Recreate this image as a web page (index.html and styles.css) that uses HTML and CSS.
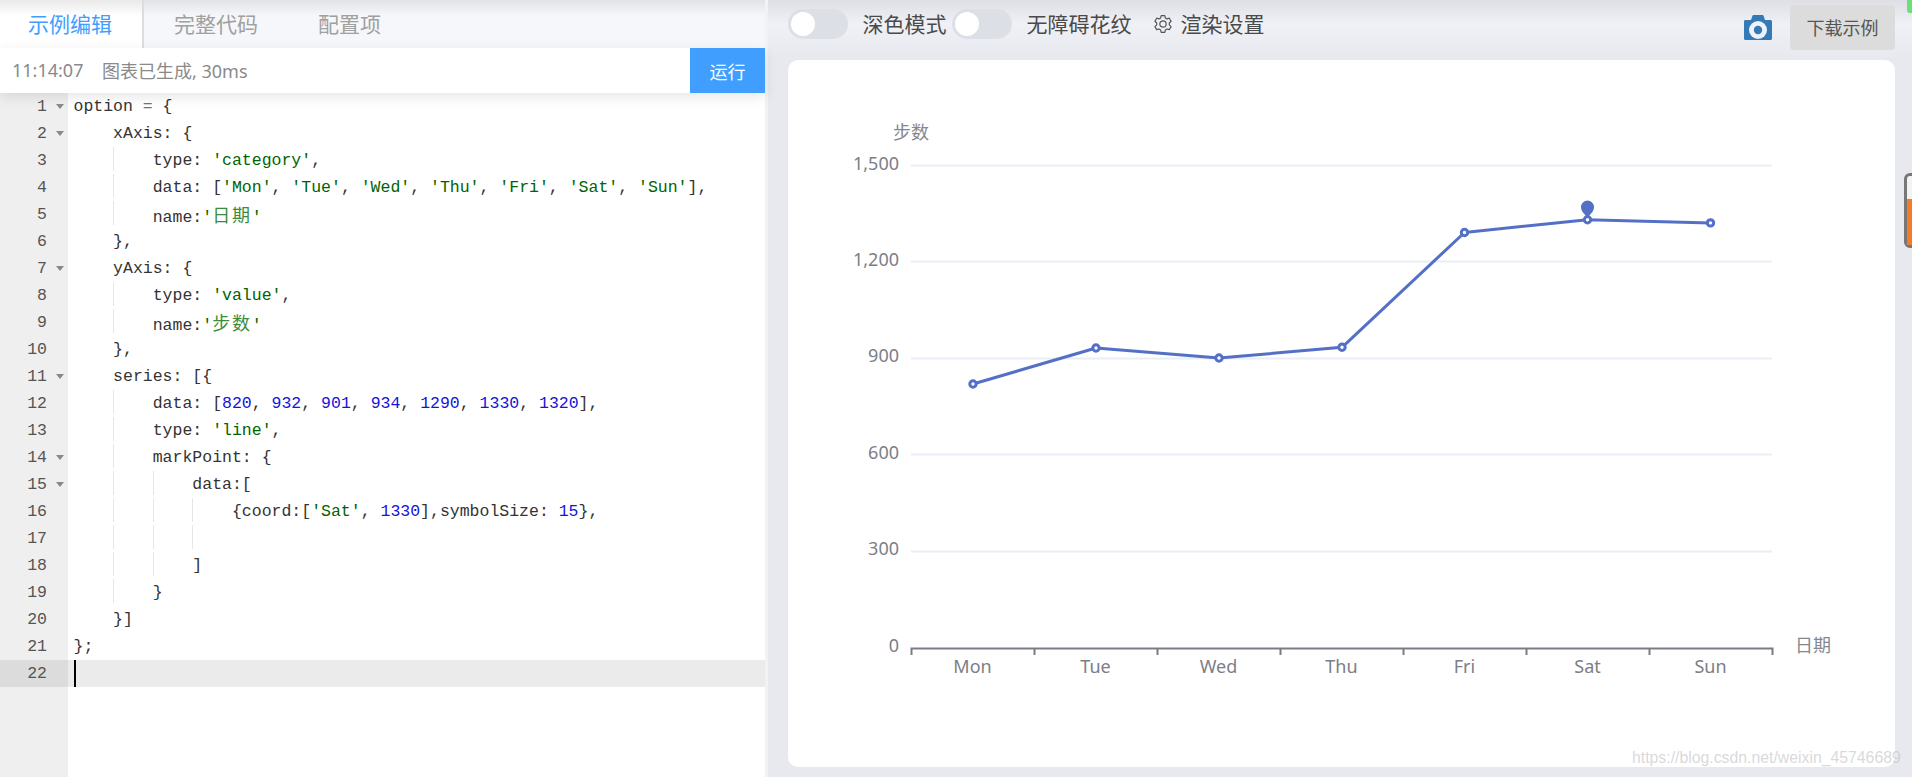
FILE: index.html
```html
<!DOCTYPE html>
<html lang="zh">
<head>
<meta charset="utf-8">
<title>示例编辑</title>
<link rel="stylesheet" href="styles.css">
</head>
<body>
<div class="page">
  <section class="left">
    <nav class="tabs">
      <a class="tab active">示例编辑</a>
      <a class="tab">完整代码</a>
      <a class="tab">配置项</a>
    </nav>
    <div class="status">
      <span class="time">11:14:07</span>
      <span class="msg">图表已生成, 30ms</span>
      <button class="run">运行</button>
    </div>
    <div class="editor">
      <div class="gutter">
        <div class="num fold">1</div>
        <div class="num fold">2</div>
        <div class="num">3</div>
        <div class="num">4</div>
        <div class="num">5</div>
        <div class="num">6</div>
        <div class="num fold">7</div>
        <div class="num">8</div>
        <div class="num">9</div>
        <div class="num">10</div>
        <div class="num fold">11</div>
        <div class="num">12</div>
        <div class="num">13</div>
        <div class="num fold">14</div>
        <div class="num fold">15</div>
        <div class="num">16</div>
        <div class="num">17</div>
        <div class="num">18</div>
        <div class="num">19</div>
        <div class="num">20</div>
        <div class="num">21</div>
        <div class="num current">22</div>
      </div>
      <div class="code">
<div class="line">option <span class="o">=</span> {</div>
<div class="line"><span class="i">    </span>xAxis: {</div>
<div class="line"><span class="i">    </span><span class="g">    </span>type: <span class="s">'category'</span>,</div>
<div class="line"><span class="i">    </span><span class="g">    </span>data: [<span class="s">'Mon'</span>, <span class="s">'Tue'</span>, <span class="s">'Wed'</span>, <span class="s">'Thu'</span>, <span class="s">'Fri'</span>, <span class="s">'Sat'</span>, <span class="s">'Sun'</span>],</div>
<div class="line"><span class="i">    </span><span class="g">    </span>name:<span class="s">'<span class="c">日期</span>'</span></div>
<div class="line"><span class="i">    </span>},</div>
<div class="line"><span class="i">    </span>yAxis: {</div>
<div class="line"><span class="i">    </span><span class="g">    </span>type: <span class="s">'value'</span>,</div>
<div class="line"><span class="i">    </span><span class="g">    </span>name:<span class="s">'<span class="c">步数</span>'</span></div>
<div class="line"><span class="i">    </span>},</div>
<div class="line"><span class="i">    </span>series: [{</div>
<div class="line"><span class="i">    </span><span class="g">    </span>data: [<span class="n">820</span>, <span class="n">932</span>, <span class="n">901</span>, <span class="n">934</span>, <span class="n">1290</span>, <span class="n">1330</span>, <span class="n">1320</span>],</div>
<div class="line"><span class="i">    </span><span class="g">    </span>type: <span class="s">'line'</span>,</div>
<div class="line"><span class="i">    </span><span class="g">    </span>markPoint: {</div>
<div class="line"><span class="i">    </span><span class="g">    </span><span class="g">    </span>data:[</div>
<div class="line"><span class="i">    </span><span class="g">    </span><span class="g">    </span><span class="g">    </span>{coord:[<span class="s">'Sat'</span>, <span class="n">1330</span>],symbolSize: <span class="n">15</span>},</div>
<div class="line"><span class="i">    </span><span class="g">    </span><span class="g">    </span><span class="g">    </span></div>
<div class="line"><span class="i">    </span><span class="g">    </span><span class="g">    </span>]</div>
<div class="line"><span class="i">    </span><span class="g">    </span>}</div>
<div class="line"><span class="i">    </span>}]</div>
<div class="line">};</div>
<div class="line current"><span class="cursor"></span></div>
      </div>
    </div>
  </section>
  <div class="split"></div>
  <section class="right">
    <div class="tools">
      <span class="switch"><span class="knob"></span></span>
      <span class="label first">深色模式</span>
      <span class="switch"><span class="knob"></span></span>
      <span class="label second">无障碍花纹</span>
      <svg class="gear" viewBox="0 0 20 20" width="20" height="20">
        <path d="M8.2 1.6h3.6l.6 2.4 1.5.9 2.4-.7 1.8 3.1-1.8 1.7v1.9l1.8 1.7-1.8 3.1-2.4-.7-1.5.9-.6 2.4H8.2l-.6-2.4-1.5-.9-2.4.7-1.8-3.1 1.8-1.7V9l-1.8-1.7 1.8-3.1 2.4.7 1.5-.9z" fill="none" stroke="#555" stroke-width="1.2" stroke-linejoin="round"/>
        <circle cx="10" cy="10" r="3.2" fill="none" stroke="#555" stroke-width="1.2"/>
      </svg>
      <span class="label">渲染设置</span>
      <svg class="camera" viewBox="0 0 28 25" width="28" height="25">
        <path d="M1.5 5H7l1.2-3.6C8.5.5 9 0 10 0h8c1 0 1.500.5 1.800 1.400L21 5h5.500C27.400 5 28 5.600 28 6.500v17c0 .9-.6 1.500-1.500 1.500h-25C.6 25 0 24.400 0 23.500v-17C0 5.600.6 5 1.500 5z" fill="#337ab7"/>
        <circle cx="14" cy="15" r="9" fill="#f1f2f7"/>
        <circle cx="14" cy="15" r="4.200" fill="#337ab7"/>
      </svg>
      <button class="download">下载示例</button>
    </div>
    <div class="card">
      <svg class="chart" viewBox="788 60 1107 707" width="1107" height="707">
        <g class="grid">
          <line x1="911" x2="1772" y1="165.500" y2="165.500"/>
          <line x1="911" x2="1772" y1="261.500" y2="261.500"/>
          <line x1="911" x2="1772" y1="358.500" y2="358.500"/>
          <line x1="911" x2="1772" y1="454.500" y2="454.500"/>
          <line x1="911" x2="1772" y1="551.500" y2="551.500"/>
        </g>
        <path class="axis" d="M911.500 655V648.500H1772.500V655M1034.500 648.500V655M1157.500 648.500V655M1280.500 648.500V655M1403.500 648.500V655M1526.500 648.500V655M1649.500 648.500V655"/>
        <g class="ylab">
          <text x="899" y="170">1,500</text>
          <text x="899" y="266">1,200</text>
          <text x="899" y="362">900</text>
          <text x="899" y="459">600</text>
          <text x="899" y="555">300</text>
          <text x="899" y="652">0</text>
        </g>
        <g class="xlab">
          <text x="972.500" y="672.500">Mon</text>
          <text x="1095.500" y="672.500">Tue</text>
          <text x="1218.500" y="672.500">Wed</text>
          <text x="1341.500" y="672.500">Thu</text>
          <text x="1464.500" y="672.500">Fri</text>
          <text x="1587.500" y="672.500">Sat</text>
          <text x="1710.500" y="672.500">Sun</text>
        </g>
        <text class="name" x="893" y="139">步数</text>
        <text class="name" x="1795" y="652">日期</text>
        <polyline class="series" points="973,384 1096,348 1219,358 1342,347.300 1464.500,232.500 1587.500,219.700 1710.500,222.900"/>
        <g class="dots">
          <circle cx="973" cy="384" r="3.200"/>
          <circle cx="1096" cy="348" r="3.200"/>
          <circle cx="1219" cy="358" r="3.200"/>
          <circle cx="1342" cy="347.300" r="3.200"/>
          <circle cx="1464.500" cy="232.500" r="3.200"/>
          <circle cx="1587.500" cy="219.700" r="3.200"/>
          <circle cx="1710.500" cy="222.900" r="3.200"/>
        </g>
        <path class="pin" d="M1587.500 218.500C1586 214.500 1581 212.500 1581 207A6.500 6.500 0 0 1 1594 207C1594 212.500 1589 214.500 1587.500 218.500Z"/>
      </svg>
    </div>
  </section>
  <div class="corner"></div>
  <div class="handle"><span class="handle-fill"></span></div>
  <div class="mark">https://blog.csdn.net/weixin_45746689</div>
</div>
</body>
</html>
```
FILE: styles.css
```css
* { box-sizing: border-box; }
html, body { margin: 0; height: 100%; overflow: hidden; }
body { font-family: "Noto Sans", "Noto Sans CJK SC", sans-serif; background: #e8e9ee; }
.page { position: relative; display: flex; width: 1912px; height: 777px; overflow: hidden; }

.left { width: 765px; flex: none; display: flex; flex-direction: column; background: #fff; }
.split { width: 3px; flex: none; background: #f1f2f5; }
.right { flex: 1; display: flex; flex-direction: column; background: linear-gradient(#dedfe4 0, #f0f1f6 24px, #e8e9ee 58px); }

.tabs { height: 48px; display: flex; flex: none; background: linear-gradient(#e2e3e6 0, #f6f7fb 16px); }
.tab { display: flex; align-items: center; padding: 0 30px; font-size: 21px; line-height: 48px; color: #a0a0a0; }
.tab.active { width: 144px; padding: 0 0 0 28px; color: #409eff; background: linear-gradient(#e9e9e9 0, #fff 16px); border-right: 2px solid #ddd; }

.status { height: 45px; flex: none; display: flex; align-items: center; position: relative; padding-bottom: 2px; background: #fff; box-shadow: 0 4px 12px rgba(0, 0, 0, .1); font-size: 18px; color: #8a8a8a; }
.time { margin-left: 12px; width: 90px; }
.msg { flex: 1; }
.run { width: 75px; height: 45px; margin-bottom: -2px; border: 0; padding: 0; background: #409eff; color: #fff; font: inherit; }

.editor { flex: 1; display: flex; font-family: "Liberation Mono", monospace; font-size: 16.500px; line-height: 27px; color: #333; }
.gutter { width: 68px; flex: none; background: #efefef; }
.num { position: relative; height: 27px; padding-right: 21px; text-align: right; color: #555; }
.num.fold::after { content: ""; position: absolute; left: 56px; top: 11px; border: 4px solid transparent; border-top: 5px solid #888; border-bottom: 0; }
.num.current { background: #dcdcdc; }
.code { flex: 1; padding-left: 5.500px; }
.line { height: 27px; white-space: pre; }
.line.current { margin-left: -5.500px; padding-left: 5.500px; background: #ebebeb; }
.g { display: inline-block; height: 24px; vertical-align: top; box-shadow: inset 1px 0 0 #e6e6e6; }
.s { color: #006400; }
.n { color: #1414dc; }
.o { color: #687687; }
.c { font-family: "Noto Sans CJK SC", sans-serif; font-size: 18px; letter-spacing: 1.800px; color: #3c8c3c; }
.cursor { display: inline-block; width: 2.500px; height: 27px; background: #000; vertical-align: top; }

.tools { height: 60px; flex: none; display: flex; align-items: flex-start; padding: 9px 17px 0 20px; font-size: 21px; color: #4a4a4a; }
.switch { width: 60px; height: 30px; flex: none; padding: 3px; border-radius: 15px; background: #dcdfe6; }
.knob { display: block; width: 24px; height: 24px; border-radius: 50%; background: #fff; }
.label { line-height: 30px; white-space: nowrap; }
.label.first { margin: 0 5px 0 14.500px; }
.label.second { margin-left: 15px; }
.gear { margin: 5px 8px 0 21px; flex: none; }
.camera { margin: 6px 18px 0 auto; flex: none; }
.download { width: 105px; height: 45px; margin-top: -4px; border: 0; padding: 0 0 2px; border-radius: 4px; background: #dcdcdc; color: #555; font-family: inherit; font-size: 18px; }

.card { width: 1107px; height: 707px; flex: none; margin-left: 20px; border-radius: 10px; background: #fff; overflow: hidden; }
.chart { display: block; }
.grid line { stroke: #e9edf5; stroke-width: 2; }
.axis { fill: none; stroke: #7a7c85; stroke-width: 2; }
.ylab text { font-size: 18px; fill: #7c7e87; text-anchor: end; }
.xlab text { font-size: 18px; fill: #7c7e87; text-anchor: middle; }
.name { font-size: 18px; fill: #85878f; }
.series { fill: none; stroke: #5470c6; stroke-width: 3; stroke-linejoin: round; }
.dots circle { fill: #fff; stroke: #5470c6; stroke-width: 3; }
.pin { fill: #5470c6; }

.corner { position: absolute; right: 0; top: 0; width: 5px; height: 13px; border-bottom-left-radius: 3px; background: #6adf7a; }
.handle { position: absolute; left: 1904px; top: 173px; width: 14px; height: 75px; padding: 23px 0 0 0; border: 3px solid #777; border-radius: 6px; background: #f3f3f6; }
.handle-fill { display: block; height: 100%; background: #f57a2a; }
.mark { position: absolute; left: 1632px; top: 747px; font-family: "Liberation Sans", sans-serif; font-size: 15.800px; line-height: 22px; color: rgba(195, 195, 200, .65); white-space: nowrap; }
```
